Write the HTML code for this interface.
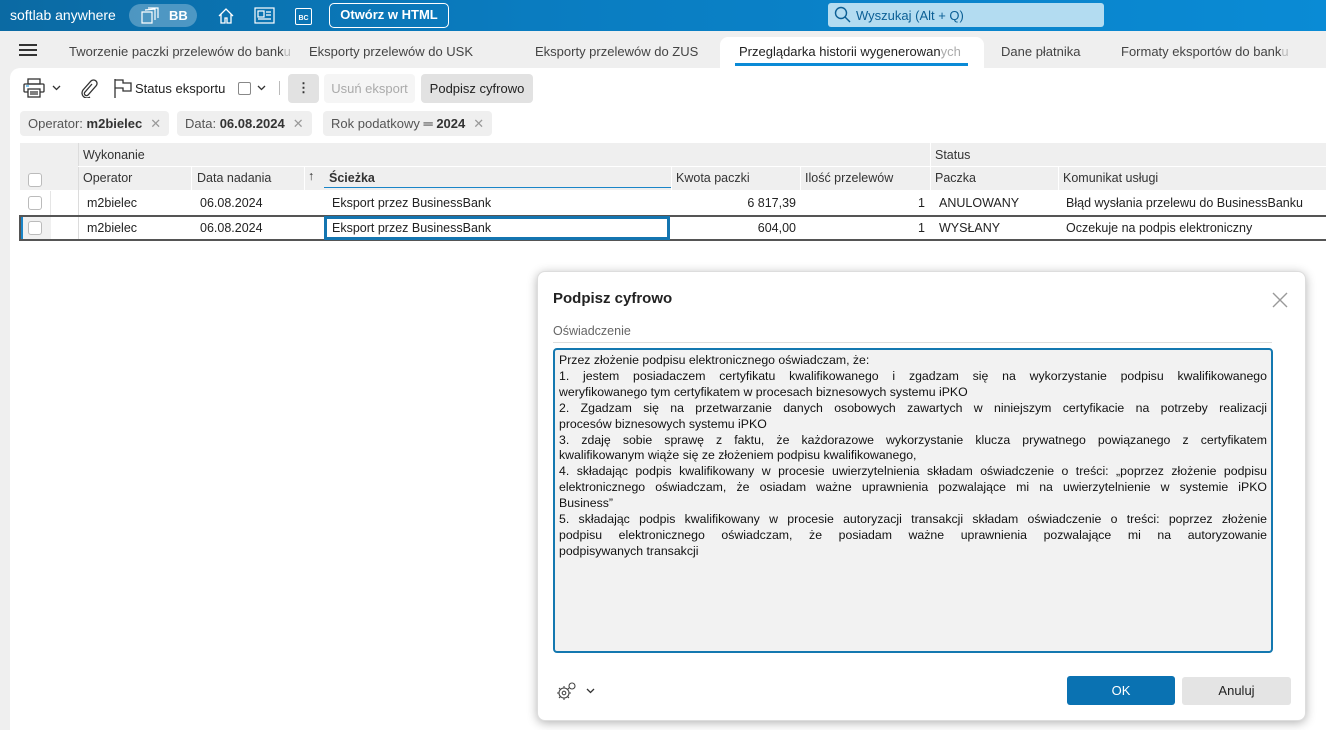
<!DOCTYPE html>
<html><head><meta charset="utf-8">
<style>
*{box-sizing:border-box;margin:0;padding:0}
body{width:1326px;height:730px;overflow:hidden;background:#efefef;font-family:"Liberation Sans",sans-serif;font-size:13px;color:#222;position:relative}
.a{position:absolute;white-space:nowrap}
#top{left:0;top:0;width:1326px;height:31px;background:linear-gradient(90deg,#0b6aa3 0%,#0a7cc0 40%,#0a8bd5 100%)}
.tab{top:44px;color:#444;font-size:13px}
#panel{left:10px;top:68px;width:1316px;height:662px;background:#fff;border-top-left-radius:10px}
.chip{top:111px;height:25px;background:#efefef;border-radius:4px;color:#555;font-size:13px;line-height:25px;padding:0 8px}
.chip b{color:#333}
.x{color:#999;margin-left:8px}
.th{font-size:12.5px;color:#333}
.td{font-size:12.5px;color:#222}
.cb{width:14px;height:14px;border:1px solid #bbb;border-radius:3px;background:#fff}
#dlg{left:537px;top:271px;width:769px;height:450px;background:#fff;border-radius:8px;box-shadow:0 2px 10px rgba(0,0,0,.3);border:1px solid #ddd}
#ta{left:553px;top:348px;width:720px;height:305px;background:#f2f2f2;border:2px solid #1478b0;border-radius:4px;padding:3px 4px 0 4px;font-size:12.3px;line-height:15.9px;color:#111}
#ta div{text-align:justify;text-align-last:justify;white-space:nowrap;overflow:hidden}
#ta div.l{text-align-last:left}
</style></head><body>
<div id="top" class="a"></div>
<div class="a" style="left:10px;top:7px;color:#fff;font-size:14px">softlab anywhere</div>
<div class="a" style="left:129px;top:4px;width:68px;height:23px;background:rgba(255,255,255,.28);border-radius:12px"></div>
<svg class="a" style="left:139px;top:7px" width="22" height="18" viewBox="0 0 22 18" fill="none" stroke="#fff" stroke-width="1.2"><path d="M3 5h10v11H3zM6 3l10-1v11M9 1l10 0v10"/></svg>
<div class="a" style="left:169px;top:8px;color:#fff;font-weight:bold;font-size:13px">BB</div>
<svg class="a" style="left:217px;top:7px" width="18" height="18" viewBox="0 0 18 18" fill="none" stroke="#fff" stroke-width="1.3"><path d="M2 9L9 2l7 7M4 7v9h4v-5h2v5h4V7"/></svg>
<svg class="a" style="left:254px;top:7px" width="21" height="17" viewBox="0 0 21 17" fill="none" stroke="#fff" stroke-width="1.2"><rect x="1" y="1" width="19" height="15"/><rect x="4" y="4" width="6" height="6"/><path d="M12 5h5M12 8h5M4 12h13"/></svg>
<div class="a" style="left:295px;top:8px;width:17px;height:17px;border:1.3px solid #fff;border-radius:2px;color:#fff;font-size:7px;font-weight:bold;line-height:20px;text-align:center">BC</div>
<div class="a" style="left:329px;top:3px;width:120px;height:25px;border:1.5px solid #fff;border-radius:5px;color:#fff;font-weight:bold;font-size:13px;line-height:22px;text-align:center">Otwórz w HTML</div>
<div class="a" style="left:828px;top:3px;width:276px;height:24px;background:#b3dcf1;border-radius:3px"></div>
<svg class="a" style="left:834px;top:6px" width="17" height="17" viewBox="0 0 17 17" fill="none" stroke="#0b5f95" stroke-width="1.4"><circle cx="7" cy="7" r="5.5"/><path d="M11 11l5 5"/></svg>
<div class="a" style="left:856px;top:8px;color:#0b5f95;font-size:13px">Wyszukaj (Alt + Q)</div>

<div class="a" style="left:19px;top:44px;width:18px;height:2px;background:#333;box-shadow:0 5px 0 #333,0 10px 0 #333"></div>
<div class="a tab" style="left:69px">Tworzenie paczki przelewów do bank<span style="color:#bbb">u</span></div>
<div class="a tab" style="left:309px">Eksporty przelewów do USK</div>
<div class="a tab" style="left:535px">Eksporty przelewów do ZUS</div>
<div class="a" style="left:720px;top:37px;width:264px;height:34px;background:#fff;border-radius:8px 8px 0 0"></div>
<div class="a tab" style="left:739px;color:#222">Przeglądarka historii wygenerowan<span style="color:#aaa">ych</span></div>
<div class="a" style="left:735px;top:63px;width:233px;height:3px;background:#0a8ad6"></div>
<div class="a tab" style="left:1001px">Dane płatnika</div>
<div class="a tab" style="left:1121px">Formaty eksportów do bank<span style="color:#bbb">u</span></div>

<div id="panel" class="a"></div>
<svg class="a" style="left:23px;top:78px" width="22" height="20" viewBox="0 0 22 20" fill="none" stroke="#333" stroke-width="1.3"><rect x="5" y="1" width="12" height="5"/><rect x="1" y="6" width="20" height="8" rx="1"/><rect x="5" y="11" width="12" height="8" fill="#fff"/><path d="M7 14h8M7 16h8"/><path d="M3 8h3" stroke="#3aa0e0"/></svg>
<svg class="a" style="left:52px;top:85px" width="9" height="6" viewBox="0 0 9 6" fill="none" stroke="#333" stroke-width="1.3"><path d="M1 1l3.5 3.5L8 1"/></svg>
<svg class="a" style="left:78px;top:78px" width="20" height="20" viewBox="0 0 20 20" fill="none" stroke="#333" stroke-width="1.3"><path d="M14 6l-7 8a2 2 0 003 3l8-9a3.5 3.5 0 00-5-5L5 12a5 5 0 007 7"/></svg>
<svg class="a" style="left:113px;top:78px" width="20" height="20" viewBox="0 0 20 20" fill="none" stroke="#333" stroke-width="1.3"><path d="M2 1v19M2 2h8v3h8v8h-8v-3H2"/></svg>
<div class="a" style="left:135px;top:81px;color:#222">Status eksportu</div>
<div class="a" style="left:238px;top:82px;width:13px;height:13px;border:1px solid #888;border-radius:2px"></div>
<svg class="a" style="left:257px;top:85px" width="9" height="6" viewBox="0 0 9 6" fill="none" stroke="#333" stroke-width="1.3"><path d="M1 1l3.5 3.5L8 1"/></svg>
<div class="a" style="left:279px;top:81px;width:1px;height:14px;background:#bbb"></div>
<div class="a" style="left:288px;top:74px;width:31px;height:29px;background:#e2e2e2;border-radius:4px;text-align:center;line-height:28px;color:#333;font-weight:bold">⋮</div>
<div class="a" style="left:324px;top:74px;width:91px;height:29px;background:#f5f5f5;border-radius:4px;text-align:center;line-height:29px;color:#aaa">Usuń eksport</div>
<div class="a" style="left:421px;top:74px;width:112px;height:29px;background:#e2e2e2;border-radius:4px;text-align:center;line-height:29px;color:#222">Podpisz cyfrowo</div>

<div class="a chip" style="left:20px">Operator: <b>m2bielec</b><span class="x">✕</span></div>
<div class="a chip" style="left:177px">Data: <b>06.08.2024</b><span class="x">✕</span></div>
<div class="a chip" style="left:323px">Rok podatkowy <b>═ 2024</b><span class="x">✕</span></div>

<div class="a" style="left:20px;top:143px;width:1306px;height:47px;background:#efefef"></div>
<div class="a" style="left:78px;top:143px;width:1px;height:98px;background:#dcdcdc"></div>
<div class="a" style="left:78px;top:166px;width:1248px;height:1px;background:#fff"></div>
<div class="a" style="left:930px;top:143px;width:1px;height:24px;background:#fff"></div>
<div class="a th" style="left:83px;top:148px">Wykonanie</div>
<div class="a th" style="left:935px;top:148px">Status</div>
<div class="a cb" style="left:28px;top:173px"></div>
<div class="a th" style="left:83px;top:171px">Operator</div>
<div class="a th" style="left:197px;top:171px">Data nadania</div>
<div class="a th" style="left:308px;top:169px">↑</div>
<div class="a th" style="left:329px;top:171px;font-weight:bold">Ścieżka</div>
<div class="a" style="left:324px;top:187px;width:347px;height:1px;background:#1a85c8"></div>
<div class="a th" style="left:676px;top:171px">Kwota paczki</div>
<div class="a th" style="left:805px;top:171px">Ilość przelewów</div>
<div class="a th" style="left:935px;top:171px">Paczka</div>
<div class="a th" style="left:1063px;top:171px">Komunikat usługi</div>
<div class="a" style="left:191px;top:167px;width:1px;height:23px;background:#fff"></div>
<div class="a" style="left:304px;top:167px;width:1px;height:23px;background:#fff"></div>
<div class="a" style="left:671px;top:167px;width:1px;height:23px;background:#fff"></div>
<div class="a" style="left:800px;top:167px;width:1px;height:23px;background:#fff"></div>
<div class="a" style="left:930px;top:167px;width:1px;height:23px;background:#fff"></div>
<div class="a" style="left:1058px;top:167px;width:1px;height:23px;background:#fff"></div>

<div class="a cb" style="left:28px;top:196px"></div>
<div class="a" style="left:50px;top:191px;width:1px;height:24px;background:#e5e5e5"></div>
<div class="a td" style="left:87px;top:196px">m2bielec</div>
<div class="a td" style="left:200px;top:196px">06.08.2024</div>
<div class="a td" style="left:332px;top:196px">Eksport przez BusinessBank</div>
<div class="a td" style="left:680px;top:196px;width:116px;text-align:right">6 817,39</div>
<div class="a td" style="left:810px;top:196px;width:115px;text-align:right">1</div>
<div class="a td" style="left:939px;top:196px">ANULOWANY</div>
<div class="a td" style="left:1066px;top:196px">Błąd wysłania przelewu do BusinessBanku</div>

<div class="a" style="left:19px;top:215px;width:1307px;height:26px;border:2px solid #555;border-right:none"></div>
<div class="a" style="left:21px;top:217px;width:2px;height:22px;background:#1a85c8"></div>
<div class="a" style="left:23px;top:217px;width:28px;height:22px;background:#f0f0f0"></div>
<div class="a cb" style="left:28px;top:221px"></div>
<div class="a td" style="left:87px;top:221px">m2bielec</div>
<div class="a td" style="left:200px;top:221px">06.08.2024</div>
<div class="a" style="left:324px;top:216px;width:346px;height:24px;border:3px solid #1475b0"></div>
<div class="a td" style="left:332px;top:221px">Eksport przez BusinessBank</div>
<div class="a td" style="left:680px;top:221px;width:116px;text-align:right">604,00</div>
<div class="a td" style="left:810px;top:221px;width:115px;text-align:right">1</div>
<div class="a td" style="left:939px;top:221px">WYSŁANY</div>
<div class="a td" style="left:1066px;top:221px">Oczekuje na podpis elektroniczny</div>

<div id="dlg" class="a"></div>
<div class="a" style="left:553px;top:290px;font-size:15px;font-weight:bold;color:#222">Podpisz cyfrowo</div>
<svg class="a" style="left:1272px;top:292px" width="16" height="16" viewBox="0 0 16 16" stroke="#999" stroke-width="1.4"><path d="M1 1l14 14M15 1L1 15"/></svg>
<div class="a" style="left:553px;top:324px;color:#666;font-size:12.5px">Oświadczenie</div>
<div class="a" style="left:553px;top:342px;width:719px;height:1px;background:#ddd"></div>
<div id="ta" class="a">
<div class="l">Przez złożenie podpisu elektronicznego oświadczam, że:</div>
<div>1. jestem posiadaczem certyfikatu kwalifikowanego i zgadzam się na wykorzystanie podpisu kwalifikowanego</div>
<div class="l">weryfikowanego tym certyfikatem w procesach biznesowych systemu iPKO</div>
<div>2. Zgadzam się na przetwarzanie danych osobowych zawartych w niniejszym certyfikacie na potrzeby realizacji</div>
<div class="l">procesów biznesowych systemu iPKO</div>
<div>3. zdaję sobie sprawę z faktu, że każdorazowe wykorzystanie klucza prywatnego powiązanego z certyfikatem</div>
<div class="l">kwalifikowanym wiąże się ze złożeniem podpisu kwalifikowanego,</div>
<div>4. składając podpis kwalifikowany w procesie uwierzytelnienia składam oświadczenie o treści: „poprzez złożenie podpisu</div>
<div>elektronicznego oświadczam, że osiadam ważne uprawnienia pozwalające mi na uwierzytelnienie w systemie iPKO</div>
<div class="l">Business”</div>
<div>5. składając podpis kwalifikowany w procesie autoryzacji transakcji składam oświadczenie o treści: poprzez złożenie</div>
<div>podpisu elektronicznego oświadczam, że posiadam ważne uprawnienia pozwalające mi na autoryzowanie</div>
<div class="l">podpisywanych transakcji</div>
</div>
<svg class="a" style="left:556px;top:681px" width="22" height="20" viewBox="0 0 22 20" fill="none" stroke="#444" stroke-width="1.1"><circle cx="8" cy="12" r="5"/><circle cx="8" cy="12" r="1.8"/><circle cx="16" cy="5" r="3"/><path d="M8 5v2M8 17v2M1 12h2M13 12h2M3 7l1.5 1.5M11.5 15.5L13 17M3 17l1.5-1.5M11.5 8.5L13 7"/></svg>
<svg class="a" style="left:586px;top:688px" width="9" height="6" viewBox="0 0 9 6" fill="none" stroke="#333" stroke-width="1.3"><path d="M1 1l3.5 3.5L8 1"/></svg>
<div class="a" style="left:1067px;top:676px;width:108px;height:29px;background:#0a72b2;border-radius:3px;color:#fff;text-align:center;line-height:29px;font-size:13px">OK</div>
<div class="a" style="left:1182px;top:677px;width:109px;height:28px;background:#e4e4e4;border-radius:3px;color:#222;text-align:center;line-height:28px;font-size:13px">Anuluj</div>
</body></html>
